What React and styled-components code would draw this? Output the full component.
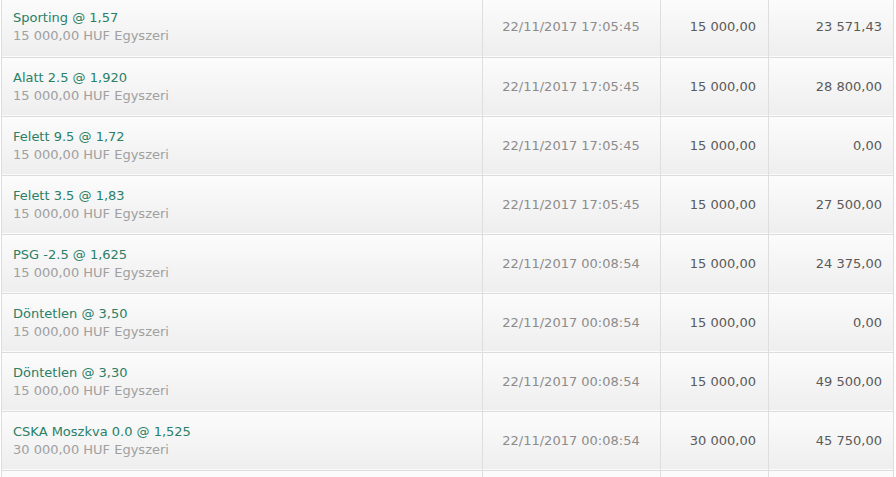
import styled, { createGlobalStyle } from 'styled-components'

const GlobalStyle = createGlobalStyle`
  html, body {
    margin: 0;
    padding: 0;
    background: #fff;
    font-family: "DejaVu Sans", Verdana, sans-serif;
    overflow: hidden;
  }
`

const Wrapper = styled.div`
  width: 892px;
  margin-top: -2px;
  margin-left: 1px;
`

const Table = styled.table`
  width: 100%;
  border-collapse: collapse;
  table-layout: fixed;
  font-size: 13px;
`

const Row = styled.tr`
  height: 59px;
  background: linear-gradient(#fcfcfc, #eeeeee);
  border-bottom: 1px solid #dcdcdc;
  box-shadow: inset 0 1px 0 #fff;
`

const Cell = styled.td`
  padding: 0 ${p => p.$pr || 12}px 0 11px;
  vertical-align: middle;
  text-align: ${p => p.$align || 'left'};
  color: ${p => p.$color || '#555'};
  border-left: 1px solid #dedede;
  border-right: 1px solid #dedede;
  white-space: nowrap;
  line-height: 18px;
`

const Selection = styled.div`
  color: #2a8066;
`

const Stake = styled.div`
  color: #a0a0a0;
`

const bets = [
  ['Sporting @ 1,57', '15 000,00', '22/11/2017 17:05:45', '23 571,43'],
  ['Alatt 2.5 @ 1,920', '15 000,00', '22/11/2017 17:05:45', '28 800,00'],
  ['Felett 9.5 @ 1,72', '15 000,00', '22/11/2017 17:05:45', '0,00'],
  ['Felett 3.5 @ 1,83', '15 000,00', '22/11/2017 17:05:45', '27 500,00'],
  ['PSG -2.5 @ 1,625', '15 000,00', '22/11/2017 00:08:54', '24 375,00'],
  ['Döntetlen @ 3,50', '15 000,00', '22/11/2017 00:08:54', '0,00'],
  ['Döntetlen @ 3,30', '15 000,00', '22/11/2017 00:08:54', '49 500,00'],
  ['CSKA Moszkva 0.0 @ 1,525', '30 000,00', '22/11/2017 00:08:54', '45 750,00'],
  ['', '', '', ''],
]

export default function App() {
  return (
    <>
      <GlobalStyle />
      <Wrapper>
        <Table>
          <colgroup>
            <col style={{ width: 481 }} />
            <col style={{ width: 178 }} />
            <col style={{ width: 108 }} />
            <col style={{ width: 125 }} />
          </colgroup>
          <tbody>
            {bets.map(([sel, stake, date, ret], i) => (
              <Row key={i}>
                <Cell>
                  {sel && <Selection>{sel}</Selection>}
                  {stake && <Stake>{stake} HUF Egyszeri</Stake>}
                </Cell>
                <Cell $align="center" $color="#8c8c8c">{date}</Cell>
                <Cell $align="right" $color="#5a5a5a">{stake}</Cell>
                <Cell $align="right" $color="#5a5a5a" $pr={11}>{ret}</Cell>
              </Row>
            ))}
          </tbody>
        </Table>
      </Wrapper>
    </>
  )
}
